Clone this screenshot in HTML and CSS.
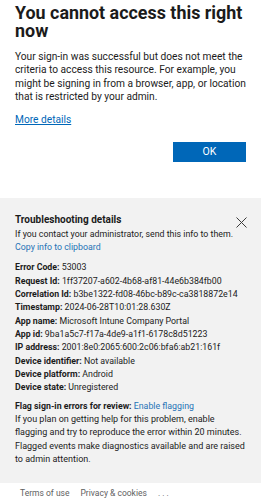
FILE: index.html
```html
<!DOCTYPE html>
<html lang="en">
<head>
<meta charset="utf-8">
<title>You cannot access this right now</title>
<link rel="stylesheet" href="styles.css">
</head>
<body>
<main class="content">
  <h1 class="title">You cannot access this right now</h1>
  <p class="desc">Your sign-in was successful but does not meet the criteria to access this resource. For example, you might be signing in from a browser, app, or location that is restricted by your admin.</p>
  <a class="more" href="#">More details</a>
  <div class="actions"><button class="ok" type="button">OK</button></div>
</main>
<section class="details">
  <div class="details-head">
    <h2 class="details-title">Troubleshooting details</h2>
    <button class="close" type="button" aria-label="Close">
      <svg width="11" height="11" viewBox="0 0 11 11"><path d="M0.5 0.5 L10.5 10.5 M10.5 0.5 L0.5 10.5" stroke="#3b3b3b" stroke-width="1" fill="none"/></svg>
    </button>
  </div>
  <p class="line">If you contact your administrator, send this info to them.</p>
  <a class="copy" href="#">Copy info to clipboard</a>
  <div class="info">
    <div class="line"><b>Error Code:</b> 53003</div>
    <div class="line"><b>Request Id:</b> 1ff37207-a602-4b68-af81-44e6b384fb00</div>
    <div class="line"><b>Correlation Id:</b> b3be1322-fd08-46bc-b89c-ca3818872e14</div>
    <div class="line"><b>Timestamp:</b> 2024-06-28T10:01:28.630Z</div>
    <div class="line"><b>App name:</b> Microsoft Intune Company Portal</div>
    <div class="line"><b>App id:</b> 9ba1a5c7-f17a-4de9-a1f1-6178c8d51223</div>
    <div class="line"><b>IP address:</b> 2001:8e0:2065:600:2c06:bfa6:ab21:161f</div>
    <div class="line"><b>Device identifier:</b> Not available</div>
    <div class="line"><b>Device platform:</b> Android</div>
    <div class="line"><b>Device state:</b> Unregistered</div>
  </div>
  <div class="flag">
    <div class="line"><b>Flag sign-in errors for review:</b> <a class="copy" href="#">Enable flagging</a></div>
    <p class="line flag-text">If you plan on getting help for this problem, enable flagging and try to reproduce the error within 20 minutes. Flagged events make diagnostics available and are raised to admin attention.</p>
  </div>
</section>
<footer class="footer">
  <a href="#">Terms of use</a>
  <a href="#">Privacy &amp; cookies</a>
  <a href="#" class="dots">. . .</a>
</footer>
</body>
</html>
```

FILE: styles.css
```css
html, body {
  margin: 0;
  padding: 0;
  background: #ffffff;
}
body {
  font-family: Roboto, "Liberation Sans", Arial, sans-serif;
  color: #1b1b1b;
  width: 261px;
}
.content {
  padding: 4px 15px 0 15px;
}
.title {
  margin: 0;
  font-size: 17.9px;
  line-height: 17.5px;
  font-weight: 700;
  color: #1b1b1b;
}
.desc {
  margin: 11px 0 0 0;
  font-size: 10.2px;
  line-height: 13.33px;
}
.more {
  display: block;
  margin-top: 9.3px;
  font-size: 10.2px;
  line-height: 13.33px;
  color: #0067b8;
  text-decoration: underline;
}
.actions {
  display: flex;
  justify-content: flex-end;
  margin-top: 16px;
}
.ok {
  width: 73px;
  height: 20px;
  border: 0;
  padding: 0;
  background: #0067b8;
  color: #ffffff;
  font-family: inherit;
  font-size: 10.5px;
}
.details {
  margin-top: 36px;
  background: #f2f2f2;
  padding: 14.7px 14px 17px 15px;
  font-size: 8.8px;
}
.details-head {
  display: flex;
  justify-content: space-between;
  align-items: flex-start;
}
.details-title {
  margin: 0;
  font-size: 10px;
  line-height: 13.33px;
  font-weight: 700;
}
.close {
  border: 0;
  background: transparent;
  padding: 0;
  margin: 4px 0 0 0;
  width: 11px;
  height: 11px;
  display: block;
}
.close svg {
  display: block;
}
.line {
  margin: 0;
  line-height: 13.33px;
}
.line b {
  font-weight: 700;
}
.copy {
  display: block;
  font-size: 8.8px;
  line-height: 13.33px;
  color: #1f72b6;
  text-decoration: none;
}
.line .copy {
  display: inline;
}
.info {
  margin-top: 7.2px;
}
.flag {
  margin-top: 5px;
}
.flag-text {
  font-size: 9px;
}
.footer {
  display: flex;
  gap: 11px;
  padding: 3.4px 0 0 20px;
  font-size: 8.5px;
  line-height: 13.33px;
}
.footer a {
  color: #616161;
  text-decoration: none;
}
```
